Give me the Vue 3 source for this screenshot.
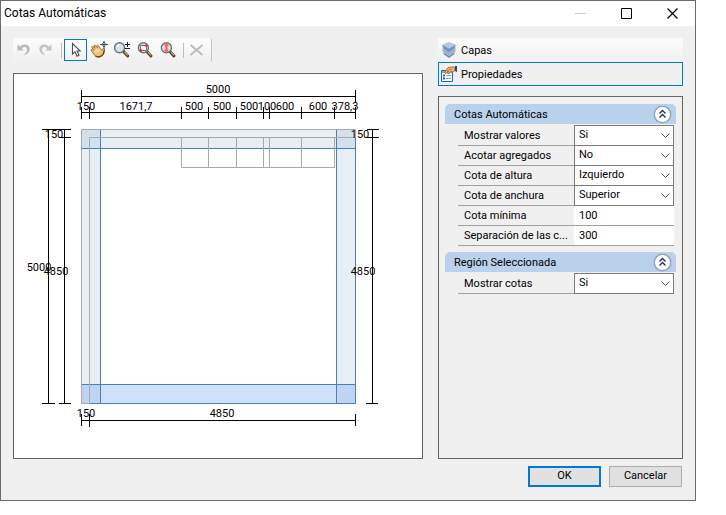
<script setup>
import { ref, reactive } from 'vue'

const activeTab = ref('propiedades')

const groups = reactive([
  {
    title: 'Cotas Automáticas',
    open: true,
    fields: [
      { id: 'valores', label: 'Mostrar valores', value: 'Si', options: ['Si', 'No'] },
      { id: 'agregados', label: 'Acotar agregados', value: 'No', options: ['Si', 'No'] },
      { id: 'altura', label: 'Cota de altura', value: 'Izquierdo', options: ['Izquierdo', 'Derecho'] },
      { id: 'anchura', label: 'Cota de anchura', value: 'Superior', options: ['Superior', 'Inferior'] },
      { id: 'minima', label: 'Cota mínima', value: '100' },
      { id: 'separacion', label: 'Separación de las c...', value: '300' },
    ],
  },
  {
    title: 'Región Seleccionada',
    open: true,
    fields: [
      { id: 'cotas', label: 'Mostrar cotas', value: 'Si', options: ['Si', 'No'] },
    ],
  },
])

// walls of the plan: [x, y, width, height]
const walls = [
  [67, 55, 275, 20],
  [67, 55, 20, 275],
  [322, 55, 20, 275],
]

// dimension lines and their end marks
const dimensions = [
  'M67 22.5H342M67.5 16V29M341.5 16V29',
  'M67 38.5H342M67.5 33V45M75.5 33V45M167.5 33V45M194.5 33V45M222.5 33V45M249.5 33V45M255.5 33V45M287.5 33V45M320.5 33V45M341.5 33V45',
  'M34.5 55V330M28 55.5H57M28 329.5H41',
  'M50.5 55V330M45 63.5H57M45 329.5H57',
  'M358.5 55V330M353 55.5H365M353 63.5H365M352 329.5H364',
  'M67 346.5H342M67.5 340V352M75.5 340V353M341.5 340V352',
]

const labels = [
  [204, 19, '5000'],
  [72, 36, '150'],
  [122, 36, '1671,7'],
  [180, 36, '500'],
  [208, 36, '500'],
  [235, 36, '500'],
  [253, 36, '100'],
  [271, 36, '600'],
  [304, 36, '600'],
  [331, 36, '378,3'],
  [40, 64, '150'],
  [346, 64, '150'],
  [25, 197, '5000'],
  [42, 201, '4850'],
  [349, 201, '4850'],
  [72, 343, '150'],
  [208, 343, '4850'],
]
</script>

<template>
  <div class="page">
    <section class="window">
      <header class="titlebar">
        <h1>Cotas Automáticas</h1>
        <button class="caption" disabled aria-label="Minimizar">
          <svg width="11" height="11"><path d="M0 5.5H11" stroke="#ccc" /></svg>
        </button>
        <button class="caption" aria-label="Maximizar">
          <svg width="11" height="11"><path d="M.5.5H10.5V10.5H.5Z" fill="none" stroke="#000" /></svg>
        </button>
        <button class="caption" aria-label="Cerrar">
          <svg width="11" height="11"><path d="M.5.5L10.5 10.5M10.5.5L.5 10.5" stroke="#000" stroke-width="1.2" /></svg>
        </button>
      </header>

      <div class="content">
        <div class="left">
          <div class="toolbar">
            <button class="tool" disabled aria-label="Deshacer">
              <svg width="18" height="18" viewBox="0 0 18 18">
                <path d="M2.5 3.5V9.5H8.5L6.8 7.3C9.3 5 12.2 6 12 9C11.8 11 10.5 12.5 8.5 14.5C12.5 13.4 15 10.8 14.7 7.5C14.2 3.3 8.8 2.2 5 5.6Z" fill="#b9b9b9" />
              </svg>
            </button>
            <button class="tool" disabled aria-label="Rehacer">
              <svg width="18" height="18" viewBox="0 0 18 18">
                <path d="M14.5 3.5V9.5H8.5L10.2 7.3C7.7 5 4.8 6 5 9C5.2 11 6.5 12.5 8.5 14.5C4.5 13.4 2 10.8 2.3 7.5C2.8 3.3 8.2 2.2 12 5.6Z" fill="#c4c4c4" />
              </svg>
            </button>
            <span class="separator"></span>
            <button class="tool selected" aria-label="Seleccionar">
              <svg width="18" height="18" viewBox="0 0 18 18">
                <path d="M5.5 2.5V13L8 10.8L10 15.2L12 14.3L10 10H13.2Z" fill="#fff" stroke="#4c5058" stroke-width="1.1" />
              </svg>
            </button>
            <button class="tool" aria-label="Desplazar">
              <svg width="18" height="18" viewBox="0 0 18 18">
                <path d="M1 9.2C1.4 8.2 2.5 8.5 3.8 9.3L1.6 6.2C1.8 5.1 3 5.2 5 7.4L3.8 4.7C4.5 3.7 5.6 4.4 7.3 6.7L6.9 4.5C7.8 3.7 8.8 4.7 10.2 7.3L11.8 9.2C12.2 7.8 13.8 7.2 14.6 8C14.5 9.3 14.2 12 13 13.8C10.8 16.8 7 16.6 4.8 14.4Z" fill="#efc078" stroke="#9c662a" stroke-width=".9" />
                <path d="M4.5 9.8L6.5 12M5.8 8.2L8 11M8 7.8L9.8 10.5" stroke="#fff0cc" />
                <path d="M5.5 15C8 16.7 12 15.5 13.4 12.8L14.3 9" fill="none" stroke="#6e430f" stroke-width="1.3" />
                <path d="M14 0V8M10 3.5H18M13 1.5H15M13 5.5H15M12.5 2.5V4.5M16 2.5V4.5" stroke="#3d4652" />
              </svg>
            </button>
            <button class="tool" aria-label="Zoom">
              <svg width="18" height="18" viewBox="0 0 18 18">
                <path d="M10.2 10.2L14.8 15" stroke="#54401f" stroke-width="3" stroke-linecap="round" />
                <path d="M11.5 11L14.8 14.4" stroke="#c4a873" stroke-width="1.3" />
                <circle cx="6.6" cy="6.7" r="5" fill="#d9e5ec" stroke="#66737a" stroke-width="1.4" />
                <path d="M4 6C4.4 4.5 5.4 3.8 7 3.9" fill="none" stroke="#fff" stroke-width="1.3" />
                <path d="M14.5 1V6M12 3.5H17M12 7.5H17" stroke="#20252b" />
              </svg>
            </button>
            <button class="tool" aria-label="Zoom de ventana">
              <svg width="18" height="18" viewBox="0 0 18 18">
                <path d="M10.7 10.2L15 15" stroke="#54401f" stroke-width="3" stroke-linecap="round" />
                <path d="M12 11L15 14.4" stroke="#c4a873" stroke-width="1.3" />
                <circle cx="7.4" cy="6.7" r="5" fill="#dfe5e8" stroke="#66737a" stroke-width="1.4" />
                <path d="M4.5 4.5H10.5V9.5H4.5Z" fill="#f4f4f4" stroke="#777" />
                <path d="M6 4.5H11M4 9.5H9" stroke="#d83a3a" stroke-width="1.2" />
                <path d="M9.5 3L12 4.5L9.5 6.3ZM5.5 7.6L3 9.4L5.5 11Z" fill="#d22d2d" />
              </svg>
            </button>
            <button class="tool" aria-label="Zoom extendido">
              <svg width="18" height="18" viewBox="0 0 18 18">
                <path d="M10.7 10.2L15 15" stroke="#54401f" stroke-width="3" stroke-linecap="round" />
                <path d="M12 11L15 14.4" stroke="#c4a873" stroke-width="1.3" />
                <circle cx="7.4" cy="6.7" r="5" fill="#e2e3e5" stroke="#66737a" stroke-width="1.4" />
                <path d="M7.4 1.8L10 4.8H8.5V8.7H10L7.4 11.7L4.8 8.7H6.3V4.8H4.8Z" fill="#f5625e" />
              </svg>
            </button>
            <span class="separator"></span>
            <button class="tool" disabled aria-label="Eliminar">
              <svg width="18" height="18" viewBox="0 0 18 18">
                <path d="M2.5 4L14.5 14M14.5 4L2.5 14" stroke="#bdbdbd" stroke-width="2.2" />
              </svg>
            </button>
          </div>

          <div class="canvas">
            <svg viewBox="0 0 408 384">
              <rect
                v-for="(w, i) in walls"
                :key="i"
                class="wall"
                :x="w[0]"
                :y="w[1]"
                :width="w[2]"
                :height="w[3]"
              />
              <rect class="region" x="67" y="310" width="275" height="20" />
              <g class="outline">
                <path d="M67 74.5H342M86.5 56V330M322.5 56V330M341.5 64V330M67 310.5H342M75 329.5H342" />
                <path class="grey" d="M75 329.5H67.5V55.5H341.5V64M75.5 330V63.5H342M167.5 63V93.5H320.5V63M194.5 63V93M222.5 63V93M249.5 63V93M255.5 63V93M287.5 63V93" />
              </g>
              <path v-for="d in dimensions" :key="d" class="dimension" :d="d" />
              <text v-for="(l, i) in labels" :key="i" :x="l[0]" :y="l[1]">{{ l[2] }}</text>
            </svg>
          </div>
        </div>

        <div class="right">
          <button class="tab" :class="{ selected: activeTab === 'capas' }" @click="activeTab = 'capas'">
            <svg width="16" height="16" viewBox="0 0 16 16">
              <path d="M1.5 9L8 6.5L14.5 9L13 12.5L8 16L3 12.5Z" fill="#6d8fba" />
              <path d="M1 6.5L8 4L15 6.5L14 9.8L8 13.5L2 9.8Z" fill="#8aa6cb" stroke="#dce8f5" stroke-width=".6" />
              <path d="M1 3L8 .3L15 3L14 7L8 11L2 7Z" fill="#7795c2" stroke="#dce8f5" stroke-width=".6" />
              <path d="M1.5 3L8 .3L14.5 3L8 6.5Z" fill="#b9c7dc" />
            </svg>
            Capas
          </button>
          <button class="tab" :class="{ selected: activeTab === 'propiedades' }" @click="activeTab = 'propiedades'">
            <svg width="16" height="16" viewBox="0 0 16 16">
              <path d="M.5 4.5H11.5V15.5H.5Z" fill="#fff" stroke="#1766c2" />
              <path d="M1 5H11V7H1Z" fill="#76b4f3" />
              <path d="M2 9.5H4M2 12.5H4" stroke="#1668c8" stroke-width="2" />
              <path d="M5 9.5H10M5 12.5H10" stroke="#72acec" />
              <path d="M3.5 6.5L7 1.5L13 .8L14 4.5L11.5 6L9.5 5.5L8 8L6.5 7.3L7.5 5L5 7.5Z" fill="#f1bd65" stroke="#8b5a16" stroke-width=".8" />
              <path d="M6 5L8.5 3.2L11 4" fill="none" stroke="#8b5a16" stroke-width=".7" />
              <path d="M14 0H16V6L14 5Z" fill="#35427f" />
            </svg>
            Propiedades
          </button>

          <div class="panel">
            <section v-for="g in groups" :key="g.title" class="group">
              <header class="group__header">
                <h2>{{ g.title }}</h2>
                <button class="collapse" :aria-label="g.title" :aria-expanded="g.open" @click="g.open = !g.open">
                  <svg width="9" height="10" viewBox="0 0 9 10">
                    <path d="M1.5 4.5L4.5 1.5L7.5 4.5M1.5 8.5L4.5 5.5L7.5 8.5" fill="none" stroke="#1c2f6b" stroke-width="1.4" />
                  </svg>
                </button>
              </header>
              <div v-if="g.open" class="fields">
                <div v-for="f in g.fields" :key="f.id" class="field">
                  <label :for="f.id">{{ f.label }}</label>
                  <div v-if="f.options" class="combo">
                    <select :id="f.id" v-model="f.value">
                      <option v-for="o in f.options" :key="o">{{ o }}</option>
                    </select>
                    <svg width="9" height="6"><path d="M.5.5L4.5 4.5L8.5.5" fill="none" stroke="#555" /></svg>
                  </div>
                  <input v-else :id="f.id" v-model="f.value" type="text">
                </div>
              </div>
            </section>
          </div>
        </div>
      </div>

      <footer class="actions">
        <button class="action default">OK</button>
        <button class="action">Cancelar</button>
      </footer>
    </section>
  </div>
</template>

<style>
body {
  background: #fff;
}
</style>

<style scoped>
.page {
  padding: 0 30px 14px 0;
  font-family: Roboto, "Liberation Sans", Arial, sans-serif;
  font-size: 11px;
  color: #000;
}

.window {
  border: 1px solid #6b6b6b;
  background: #f0f0f0;
}

button,
input,
select {
  box-sizing: border-box;
  margin: 0;
  padding: 0;
  border: none;
  border-radius: 0;
  background: transparent;
  font: inherit;
  color: inherit;
}

svg {
  display: block;
  flex: none;
}

.titlebar {
  display: flex;
  height: 25px;
  background: #fff;
}

.titlebar h1 {
  flex: 1;
  margin: 0;
  padding-left: 3px;
  font-size: 12px;
  font-weight: 400;
  line-height: 25px;
}

.caption {
  display: flex;
  align-items: center;
  justify-content: center;
  width: 46px;
}

.content {
  display: grid;
  grid-template-columns: minmax(0, 1fr) 245px;
  gap: 15px;
  padding: 12px 12px 0;
}

.toolbar {
  display: flex;
  align-items: center;
  box-sizing: border-box;
  width: 199px;
  height: 24px;
  margin-bottom: 11px;
  border-right: 1px solid #c4c4c4;
  border-radius: 2px;
  background: linear-gradient(#fdfdfd, #f0f0f0);
}

.tool {
  display: flex;
  align-items: center;
  justify-content: center;
  width: 23px;
  height: 22px;
}

.tool:disabled {
  width: 22px;
}

.tool.selected {
  border: 1px solid #0078d7;
}

.separator {
  width: 1px;
  height: 15px;
  margin: 0 2px 0 4px;
  background: #bdbdbd;
}

.canvas {
  border: 1px solid #646464;
  background: #fff;
}

.canvas svg {
  width: 100%;
  height: auto;
}

.canvas text {
  text-anchor: middle;
}

.wall {
  fill: #4682b4;
  fill-opacity: 0.13;
}

.region {
  fill: #6495ed;
  fill-opacity: 0.3;
}

.outline path {
  fill: none;
  stroke: #4682b4;
}

.outline .grey {
  stroke: #a9a9a9;
}

.dimension {
  stroke: #000;
}

.right {
  display: flex;
  flex-direction: column;
}

.tab {
  display: flex;
  align-items: center;
  gap: 4px;
  height: 24px;
  padding: 0 2px;
  border: 1px solid transparent;
  background: linear-gradient(#fcfcfc, #f0f0f0) border-box;
}

.tab.selected {
  border-color: #0078d7;
  background: #f0f0f0;
}

.panel {
  display: flex;
  flex: 1;
  flex-direction: column;
  gap: 6px;
  margin-top: 10px;
  padding: 7px 6px;
  border: 1px solid #646464;
}

.group__header {
  display: flex;
  align-items: center;
  justify-content: space-between;
  height: 20px;
  padding: 0 5px 0 9px;
  border-radius: 5px 5px 0 0;
  background: #b9d1ea;
}

.group__header h2 {
  margin: 0;
  font-size: 11px;
  font-weight: 400;
}

.collapse {
  display: flex;
  align-items: center;
  justify-content: center;
  width: 17px;
  height: 17px;
  border: 1px solid #8f9dbd;
  border-radius: 50%;
  background: #fff;
  box-shadow: 0 0 1px #666;
}

.fields {
  padding: 2px 2px 0 13px;
}

.field {
  display: flex;
  box-sizing: border-box;
  height: 20px;
  border-bottom: 1px solid #a0a0a0;
}

.field label {
  flex: 1;
  min-width: 0;
  padding-left: 6px;
  line-height: 20px;
  white-space: nowrap;
}

.field input {
  width: 100px;
  padding-left: 5px;
  background: #fff;
}

.combo {
  display: grid;
  align-items: center;
  width: 100px;
  height: 21px;
  margin-top: -1px;
}

.combo select,
.combo svg {
  grid-area: 1 / 1;
}

.combo select {
  width: 100%;
  height: 21px;
  padding: 0 16px 2px 4px;
  border: 1px solid #7a7a7a;
  background: #fff;
  appearance: none;
}

.combo svg {
  justify-self: end;
  margin-right: 4px;
  pointer-events: none;
}

.actions {
  display: flex;
  justify-content: flex-end;
  gap: 8px;
  padding: 7px 13px 13px;
}

.action {
  width: 73px;
  height: 21px;
  padding-bottom: 2px;
  border: 1px solid #adadad;
  background: #e1e1e1;
}

.action.default {
  border: 2px solid #0078d7;
}
</style>
